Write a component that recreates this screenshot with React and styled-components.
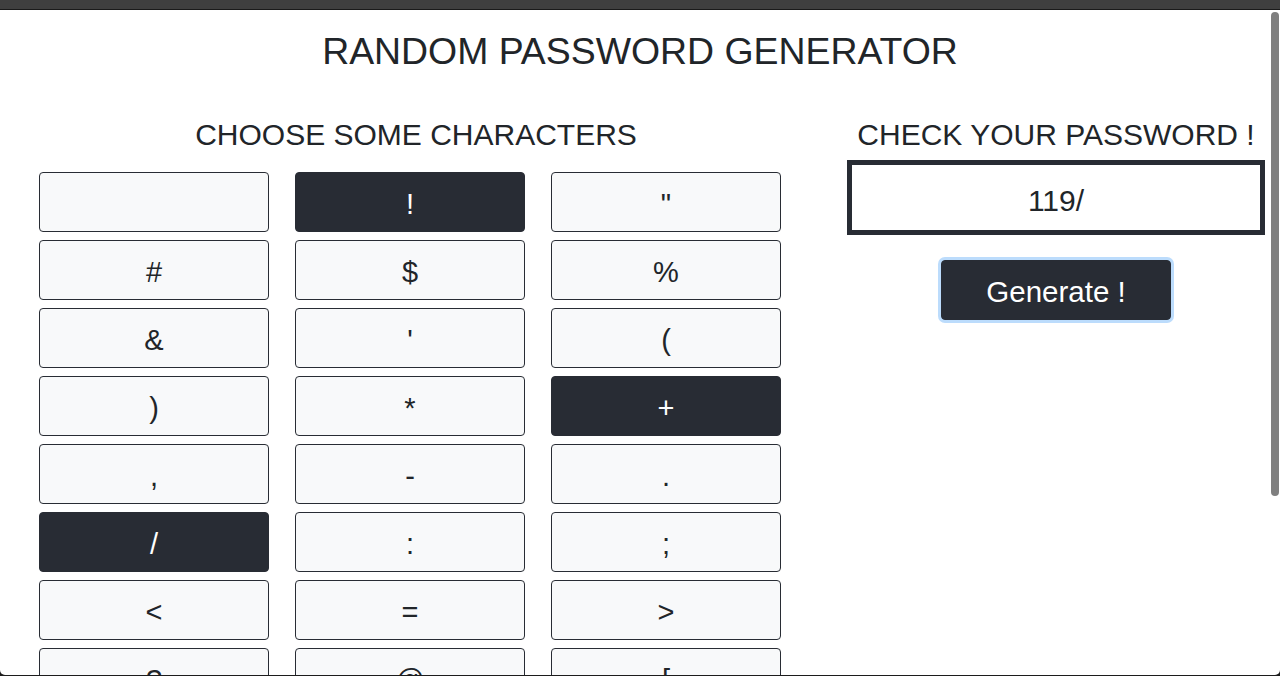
import React from "react";
import styled, { createGlobalStyle } from "styled-components";

const GlobalStyle = createGlobalStyle`
  html, body {
    margin: 0;
    height: 100%;
    background: #1c1c1c;
    overflow: hidden;
    font-family: "Liberation Sans", Arial, sans-serif;
  }
  #root { height: 100%; }
`;

const Frame = styled.div`
  display: flex;
  flex-direction: column;
  height: 675px;
`;

const TopBar = styled.div`
  flex: none;
  height: 9px;
  background: #3f3f3f;
  border-bottom: 1px solid #1a1a1a;
`;

const Window = styled.div`
  position: relative;
  flex: 1;
  min-height: 0;
  background: #ffffff;
  border-radius: 0 0 5px 5px;
  overflow: hidden;
`;

const Scroller = styled.main`
  height: 100%;
  overflow-y: auto;
  scrollbar-width: none;
  &::-webkit-scrollbar {
    display: none;
  }
`;

const ScrollThumb = styled.div`
  position: absolute;
  top: 2px;
  right: 1px;
  width: 8px;
  height: 484px;
  border-radius: 4px;
  background: #7f7f7f;
`;

const Title = styled.h1`
  margin: 0;
  padding-top: 19px;
  text-align: center;
  font-size: 37.4px;
  font-weight: 400;
  line-height: 1.2;
  color: #212529;
`;

const Columns = styled.div`
  display: grid;
  grid-template-columns: 754px 418px;
  column-gap: 54px;
  align-items: start;
  padding: 43px 15px 8px 39px;
`;

const Section = styled.section`
  display: flex;
  flex-direction: column;
  align-items: center;
`;

const Heading = styled.h3`
  margin: 0;
  font-size: 30px;
  font-weight: 400;
  line-height: 36px;
  text-align: center;
  color: #212529;
`;

const CharGrid = styled.div`
  align-self: flex-start;
  margin-top: 19px;
  display: grid;
  grid-template-columns: repeat(3, 230px);
  column-gap: 26px;
  row-gap: 8px;
`;

const CharButton = styled.button`
  display: flex;
  align-items: center;
  justify-content: center;
  height: 60px;
  padding: 5px 0 0;
  border: 1px solid #282c34;
  border-radius: 4px;
  background: ${(p) => (p.$active ? "#282c34" : "#f8f9fa")};
  color: ${(p) => (p.$active ? "#ffffff" : "#212529")};
  font-family: inherit;
  font-size: 29px;
  line-height: 1;
  white-space: pre;
  cursor: pointer;
`;

const PasswordBox = styled.div`
  box-sizing: border-box;
  width: 100%;
  height: 75px;
  margin-top: 7px;
  padding-top: 7px;
  display: flex;
  align-items: center;
  justify-content: center;
  border: 5px solid #282c34;
  background: #ffffff;
  color: #212529;
  font-size: 30px;
  line-height: 1;
`;

const GenerateButton = styled.button`
  box-sizing: border-box;
  width: 230px;
  height: 60px;
  margin-top: 25px;
  padding: 4px 0 0;
  border: 1px solid #282c34;
  border-radius: 4px;
  background: #282c34;
  color: #ffffff;
  font-family: inherit;
  font-size: 29.5px;
  line-height: 1;
  box-shadow: 0 0 0 3px #bcdcfc;
  cursor: pointer;
`;

const CHARS = [
  " ", "!", '"', "#", "$", "%", "&", "'", "(", ")", "*", "+", ",", "-", ".", "/",
  ":", ";", "<", "=", ">", "?", "@", "[", "\\", "]", "^", "_", "`", "{", "|", "}", "~",
];

const SELECTED = new Set(["!", "+", "/"]);

export default function App() {
  return (
    <>
      <GlobalStyle />
      <Frame>
        <TopBar />
        <Window>
          <Scroller>
            <Title>RANDOM PASSWORD GENERATOR</Title>
            <Columns>
              <Section>
                <Heading>CHOOSE SOME CHARACTERS</Heading>
                <CharGrid>
                  {CHARS.map((c) => (
                    <CharButton key={c} $active={SELECTED.has(c)}>
                      {c}
                    </CharButton>
                  ))}
                </CharGrid>
              </Section>
              <Section>
                <Heading>CHECK YOUR PASSWORD !</Heading>
                <PasswordBox>119/</PasswordBox>
                <GenerateButton>Generate !</GenerateButton>
              </Section>
            </Columns>
          </Scroller>
          <ScrollThumb />
        </Window>
      </Frame>
    </>
  );
}
